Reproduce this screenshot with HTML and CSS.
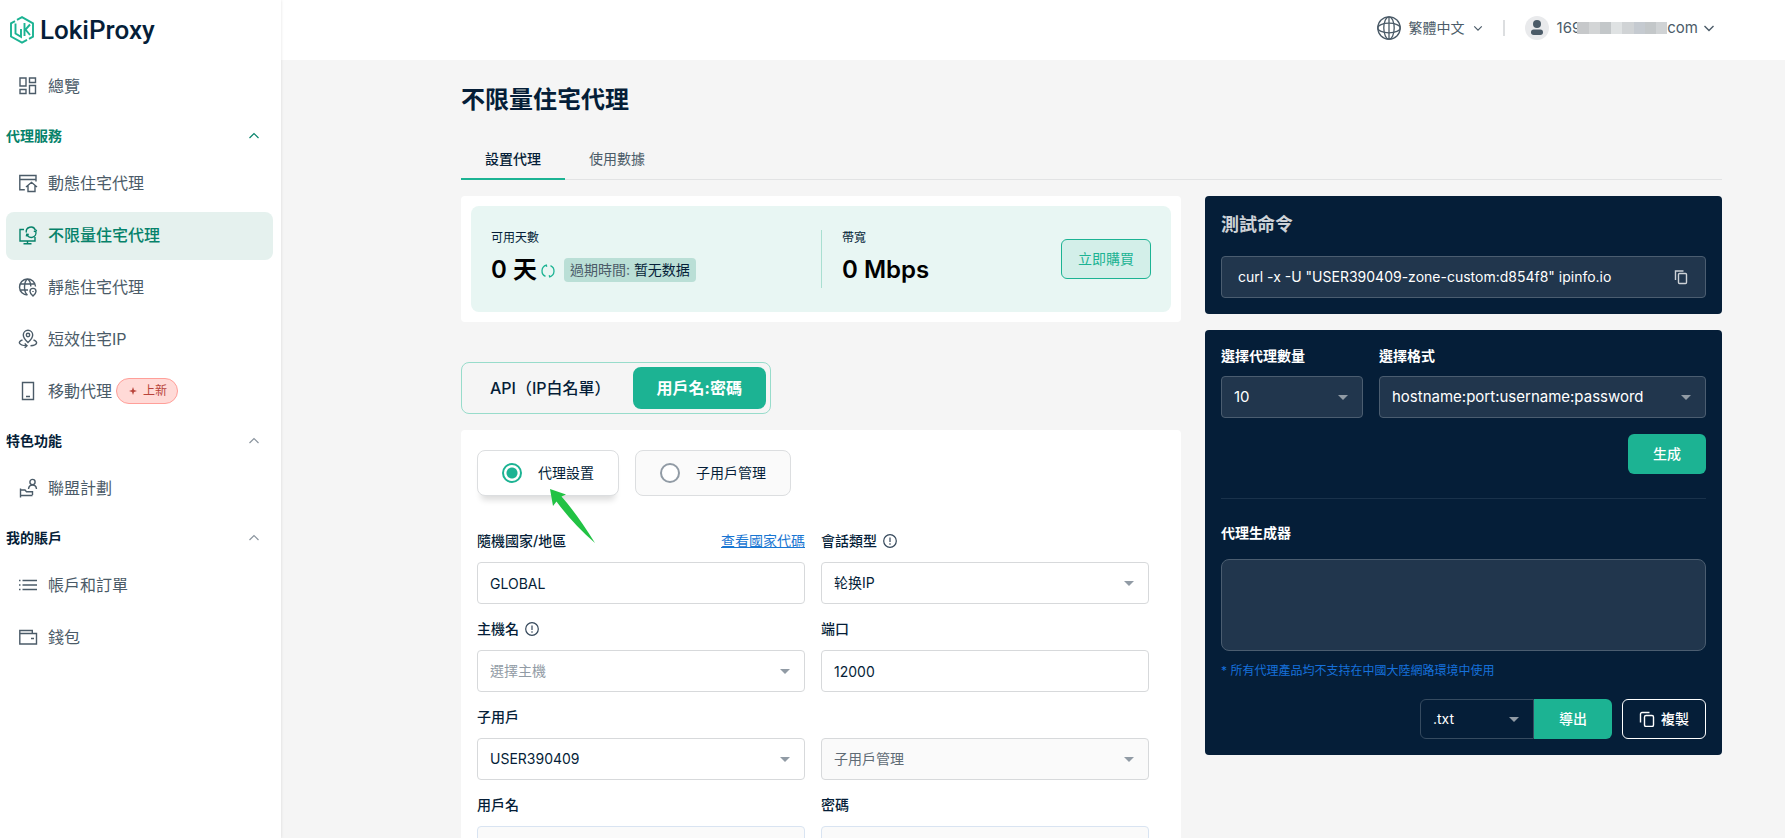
FILE: index.html
```html
<!DOCTYPE html>
<html lang="zh-Hant">
<head>
<meta charset="utf-8">
<meta name="viewport" content="width=device-width, initial-scale=1">
<title>LokiProxy - 不限量住宅代理</title>
<link rel="stylesheet" href="styles.css">
</head>
<body>
<div class="app">
  <aside class="sidebar">
    <a class="logo" href="#">
      <svg class="logo-mark" viewBox="0 0 24 28" fill="none" stroke="#1cb393" stroke-width="1.900">
        <path d="M5 5.200L1 7.400V20.500L12 26.600 17 23.800"/>
        <path d="M7 3.800L12 1.200 23 7.300V20.600L19 22.800"/>
        <path d="M5.500 7.500V17.500L11 20.800V13"/>
        <path d="M14.500 7V20M20 8.500L15.500 13.500 20 19"/>
      </svg>
      <span class="logo-text">LokiProxy</span>
    </a>
    <nav class="nav">
      <a class="item" href="#">
        <svg class="icon" viewBox="0 0 20 20"><path d="M2 2h6v8H2zM2 13.500h6V17.500H2zM11.500 2h6v4.500h-6zM11.500 9.500h6v8h-6z"/></svg>
        <span>總覽</span>
      </a>
      <button class="group current" type="button"><span>代理服務</span><svg class="chev" viewBox="0 0 12 12"><path d="M1.500 8L6 3.500 10.500 8"/></svg></button>
      <a class="item" href="#">
        <svg class="icon" viewBox="0 0 20 20"><path d="M18 8.500V2.500H1.800v14.200h5M1.800 6.500H18M8 14l5.500-4.700L19 14M10 12.800V18.500h7v-5.700"/></svg>
        <span>動態住宅代理</span>
      </a>
      <a class="item active" href="#">
        <svg class="icon" viewBox="0 0 20 20"><path d="M6 4.500H2v11.500h15v-4M9.500 16v2.700M5.500 18.700h8M8.300 7.500a4.700 4.700 0 0 1 9-2.500M17.800 6.500a4.700 4.700 0 0 1-8.800 3.200M15.800 6.200l2 .3.700-1.800M10.800 9.500l-2-.2-.5 2"/></svg>
        <span>不限量住宅代理</span>
      </a>
      <a class="item" href="#">
        <svg class="icon" viewBox="0 0 20 20"><path d="M9.500 18a8 8 0 1 1 8-8.500M9.500 18c-4-3-4-13 0-16 2.200 1.500 3.300 4.500 3.300 7.500M2.300 7h14.600M2.300 13H10M15 19c-2-1.900-3-3.100-3-4.600a3 3 0 0 1 6 0c0 1.500-1 2.700-3 4.600zM15 14v1"/></svg>
        <span>靜態住宅代理</span>
      </a>
      <a class="item" href="#">
        <svg class="icon" viewBox="0 0 20 20"><path d="M10 13.500C6.800 10.500 5.300 8.500 5.300 6a4.700 4.700 0 0 1 9.400 0c0 2.500-1.500 4.500-4.700 7.500z"/><circle cx="10" cy="6" r="1.700"/><path d="M4.500 11C-.5 12.500.2 16.200 8.500 16.800M15.500 11c4.800 1.500 4.200 5.200-3 5.800M6.700 14.500l2.300 2.300-2.300 2"/></svg>
        <span>短效住宅IP</span>
      </a>
      <a class="item" href="#">
        <svg class="icon" viewBox="0 0 20 20"><path d="M4.500 1.500h11v17h-11zM8 15.500h4"/></svg>
        <span>移動代理</span>
        <span class="badge"><svg viewBox="0 0 8 8"><path d="M4 0L5 3 8 4 5 5 4 8 3 5 0 4 3 3z"/></svg>上新</span>
      </a>
      <button class="group" type="button"><span>特色功能</span><svg class="chev" viewBox="0 0 12 12"><path d="M1.500 8L6 3.500 10.500 8"/></svg></button>
      <a class="item" href="#">
        <svg class="icon" viewBox="0 0 20 20"><circle cx="14.500" cy="4" r="2.600"/><path d="M10.500 11c.3-2.500 1.800-4 4-4s3.800 1.500 4 4M2.500 10.500V19.500M2.500 12h4.500l1.500 1.700h6v3.300M2.500 17.500h12"/></svg>
        <span>聯盟計劃</span>
      </a>
      <button class="group" type="button"><span>我的賬戶</span><svg class="chev" viewBox="0 0 12 12"><path d="M1.500 8L6 3.500 10.500 8"/></svg></button>
      <a class="item" href="#">
        <svg class="icon" viewBox="0 0 20 20"><path d="M4.500 5.500h14.500M4.500 10h14.500M4.500 14.500h14.500M1 5.500h1.500M1 10h1.500M1 14.500h1.500"/></svg>
        <span>帳戶和訂單</span>
      </a>
      <a class="item" href="#">
        <svg class="icon" viewBox="0 0 20 20"><path d="M1.800 6.500h16.700V17H1.800zM1.800 6.500V3.500h12.500v3M13 11.500h3"/></svg>
        <span>錢包</span>
      </a>
    </nav>
  </aside>

  <div class="page">
    <header class="topbar">
      <button class="top-btn" type="button">
        <svg class="globe" viewBox="0 0 24 24"><circle cx="12" cy="12" r="11.200"/><ellipse cx="12" cy="12" rx="5.200" ry="11.200"/><path d="M12 1v22"/><ellipse cx="12" cy="12" rx="11.200" ry="4.800"/></svg>
        <span>繁體中文</span>
        <svg class="chev-sm" viewBox="0 0 12 12"><path d="M1.500 4L6 8.500 10.500 4"/></svg>
      </button>
      <span class="sep"></span>
      <button class="top-btn" type="button">
        <svg class="avatar" viewBox="0 0 24 24"><circle cx="12" cy="12" r="12" fill="#e9eaec"/><circle cx="12" cy="8" r="4" fill="#4b5b68"/><rect x="6" y="13.500" width="12" height="5.500" rx="2.700" fill="#4b5b68"/></svg>
        <span class="mail"><span>169</span><span class="mosaic"><i class="m1"></i><i class="m2"></i><i class="m3"></i><i class="m4"></i><i class="m5"></i><i class="m6"></i><i class="m3"></i><i class="m5"></i></span><span>com</span></span>
        <svg class="chev-md" viewBox="0 0 12 12"><path d="M1.500 4L6 8.500 10.500 4"/></svg>
      </button>
    </header>

    <main class="content">
      <h1 class="title">不限量住宅代理</h1>
      <div class="tabs">
        <button class="tab on" type="button">設置代理</button>
        <button class="tab" type="button">使用數據</button>
      </div>
      <div class="columns">
        <div class="left">
          <section class="card summary">
            <div class="plan">
              <div class="stat days">
                <span class="stat-label">可用天數</span>
                <div class="stat-row">
                  <strong class="stat-value">0 天</strong>
                  <svg class="refresh" viewBox="0 0 14 14"><path d="M5.300 1.200A6 6 0 0 0 4.500 12.400M8.700 12.800A6 6 0 0 0 9.500 1.600M3.600 1.800l1.700-.6.500 1.500M10.400 12.200l-1.700.6-.5-1.500"/></svg>
                  <span class="expire">過期時間: <b>暂无数据</b></span>
                </div>
              </div>
              <div class="stat band">
                <span class="stat-label">帶寬</span>
                <div class="stat-row"><strong class="stat-value">0 Mbps</strong></div>
              </div>
              <button class="buy" type="button">立即購買</button>
            </div>
          </section>

          <div class="segment">
            <button class="seg" type="button">API（IP白名單）</button>
            <button class="seg on" type="button">用戶名:密碼</button>
          </div>

          <section class="card form-card">
            <div class="modes">
              <label class="mode on"><input class="radio" type="radio" name="mode" checked>代理設置</label>
              <label class="mode"><input class="radio" type="radio" name="mode">子用戶管理</label>
              <svg class="pointer" viewBox="0 0 46 55"><path d="M0 0L16 5.500 11.500 7.500Q27 25 45 54Q23 35 6.500 12.500L3 17z"/></svg>
            </div>
            <form class="fields">
              <div class="field">
                <div class="label-row"><label class="label" for="country">隨機國家/地區</label><a class="link" href="#">查看國家代碼</a></div>
                <input class="control" id="country" type="text" value="GLOBAL">
              </div>
              <div class="field">
                <div class="label-row"><label class="label" for="session">會話類型</label><svg class="info" viewBox="0 0 14 14"><circle cx="7" cy="7" r="6.300"/><path d="M7 3.500v4.500M7 9.300v1.400"/></svg></div>
                <div class="pick"><select class="control" id="session"><option>轮换IP</option></select></div>
              </div>
              <div class="field">
                <div class="label-row"><label class="label" for="host">主機名</label><svg class="info" viewBox="0 0 14 14"><circle cx="7" cy="7" r="6.300"/><path d="M7 3.500v4.500M7 9.300v1.400"/></svg></div>
                <div class="pick"><select class="control hint" id="host"><option>選擇主機</option></select></div>
              </div>
              <div class="field">
                <div class="label-row"><label class="label" for="port">端口</label></div>
                <input class="control" id="port" type="text" value="12000">
              </div>
              <div class="field">
                <div class="label-row"><label class="label" for="sub">子用戶</label></div>
                <div class="pick"><select class="control" id="sub"><option>USER390409</option></select></div>
              </div>
              <div class="field">
                <div class="label-row"></div>
                <div class="pick"><select class="control muted" aria-label="子用戶管理"><option>子用戶管理</option></select></div>
              </div>
              <div class="field">
                <div class="label-row"><label class="label" for="user">用戶名</label></div>
                <input class="control locked" id="user" type="text" readonly>
              </div>
              <div class="field">
                <div class="label-row"><label class="label" for="pass">密碼</label></div>
                <input class="control locked" id="pass" type="text" readonly>
              </div>
            </form>
          </section>
        </div>

        <div class="right">
          <section class="panel">
            <h2 class="panel-title">測試命令</h2>
            <div class="command">
              <code class="code">curl -x -U "USER390409-zone-custom:d854f8" ipinfo.io</code>
              <button class="copy-btn" type="button" aria-label="複製命令"><svg class="copy" viewBox="0 0 16 16"><path d="M2.500 11V2h8"/><rect x="5.500" y="4.500" width="8" height="10" rx="1"/></svg></button>
            </div>
          </section>
          <section class="panel">
            <div class="options">
              <div class="option count"><label class="dlabel" for="count">選擇代理數量</label><div class="pick"><select class="control dark" id="count"><option>10</option></select></div></div>
              <div class="option"><label class="dlabel" for="format">選擇格式</label><div class="pick"><select class="control dark" id="format"><option>hostname:port:username:password</option></select></div></div>
            </div>
            <div class="generate"><button class="primary" type="button">生成</button></div>
            <label class="dlabel" for="output">代理生成器</label>
            <textarea class="output" id="output"></textarea>
            <p class="note">* 所有代理產品均不支持在中國大陸網路環境中使用</p>
            <div class="actions">
              <div class="export"><div class="pick"><select class="control ext" aria-label="文件格式"><option>.txt</option></select></div><button class="primary join" type="button">導出</button></div>
              <button class="outline" type="button"><svg class="copy" viewBox="0 0 16 16"><path d="M1.500 11.500V3a1.500 1.500 0 0 1 1.500-1.500h7.500"/><rect x="5.500" y="4.500" width="9" height="11" rx="1.500"/></svg>複製</button>
            </div>
          </section>
        </div>
      </div>
    </main>
  </div>
</div>
</body>
</html>
```
FILE: styles.css
```css
* { box-sizing: border-box; }
body {
  margin: 0;
  background: #f5f5f5;
  color: #051e38;
  font-family: Inter, "Noto Sans CJK TC", sans-serif;
  font-size: 14px;
  line-height: 20px;
}
button, input, select, textarea { font: inherit; color: inherit; margin: 0; }
button { border: 0; background: none; padding: 0; cursor: pointer; }
a { color: inherit; text-decoration: none; }
svg { display: block; flex: none; }

.app { display: flex; height: 100vh; }

/* Sidebar */
.sidebar { flex: none; width: 281px; background: #fff; box-shadow: 0 0 3px rgba(0, 0, 0, .12); z-index: 1; }
.logo { display: flex; align-items: center; gap: 6px; height: 60px; padding-left: 10px; }
.logo-mark { width: 24px; height: 28px; }
.logo-text { font-family: Roboto, sans-serif; font-size: 26px; font-weight: 500; line-height: 32px; }
.nav { display: flex; flex-direction: column; padding: 1px 8px 0 6px; }
.item {
  display: flex; align-items: center; height: 48px; margin: 2px 0; padding: 0 0 2px 12px;
  border-radius: 8px; color: #4b5b68; font-size: 16px; line-height: 24px;
}
.item.active { background: #e5f1ee; color: #06826a; font-weight: 500; }
.icon { width: 20px; height: 20px; margin-right: 10px; fill: none; stroke: currentColor; stroke-width: 1.4; }
.group {
  display: flex; align-items: center; justify-content: space-between; height: 45px;
  padding-right: 13px; font-weight: 700; text-align: left;
}
.group.current { color: #06826a; }
.chev { width: 12px; height: 12px; fill: none; stroke: #8a949e; stroke-width: 1.2; }
.current .chev { stroke: #06826a; }
.badge {
  display: flex; align-items: center; gap: 6px; height: 26px; margin-left: 4px; padding: 0 10px 0 12px;
  border: 1px solid #ff9f99; border-radius: 13px; background: #ffdad7; color: #b8433a; font-size: 12px; line-height: 20px;
}
.badge svg { width: 8px; height: 8px; fill: currentColor; }

/* Top bar */
.page { flex: 1; min-width: 0; display: flex; flex-direction: column; }
.topbar {
  flex: none; display: flex; align-items: center; justify-content: flex-end; height: 60px;
  padding: 0 70px 4px 0; background: #fff; color: #4b5b68;
}
.top-btn { display: flex; align-items: center; gap: 8px; }
.globe { width: 24px; height: 24px; fill: none; stroke: #4b5b68; stroke-width: 1.3; }
.avatar { width: 24px; height: 24px; }
.chev-sm, .chev-md { width: 10px; height: 10px; fill: none; stroke: #4b5b68; stroke-width: 1.4; }
.chev-md { width: 12px; height: 12px; margin-left: -3px; }
.sep { width: 2px; height: 16px; margin: 0 20px; background: #dcdee0; }
.mail { display: flex; align-items: center; font-size: 15px; }
.mosaic { display: flex; width: 90px; height: 12px; margin-left: -4px; z-index: 1; }
.mosaic i { flex: 1; }
.m1 { background: #c6c8ca; }
.m2 { background: #d3d5d6; }
.m3 { background: #c3c7c9; }
.m4 { background: #dfe2e3; }
.m5 { background: #d0d3d5; }
.m6 { background: #c5cad0; }

/* Content */
.content { flex: 1; min-height: 0; overflow-y: auto; scrollbar-width: none; padding: 21px 63px 24px 180px; }
.title { margin: 0; font-size: 24px; line-height: 38px; font-weight: 700; }
.tabs { display: flex; margin-top: 21px; box-shadow: inset 0 -1px #e2e3e4; }
.tab { height: 40px; padding: 0 24px; color: #4b5b68; border-bottom: 2px solid transparent; }
.tab.on { border-color: #1cb393; color: #051e38; font-weight: 500; }
.columns { display: grid; grid-template-columns: 720fr 517fr; gap: 24px; margin-top: 16px; align-items: start; }
.card { background: #fff; border-radius: 4px; }
.summary { padding: 10px; }
.plan { display: flex; align-items: center; height: 106px; padding: 0 20px; border-radius: 8px; background: #e8f6f3; }
.stat { display: flex; flex-direction: column; justify-content: space-between; height: 58px; }
.days { flex: 1; }
.band { flex: 0 0 240px; padding-left: 20px; border-left: 1px solid #a9dfd1; }
.stat-label { font-size: 12px; line-height: 16px; }
.stat-row { display: flex; align-items: center; height: 36px; }
.stat-value { color: #000; font-size: 24px; line-height: 36px; font-weight: 600; }
.refresh { width: 14px; height: 14px; margin: 2px 9px 0 4px; fill: none; stroke: #1cb393; stroke-width: 1.3; }
.expire { padding: 2px 6px; border-radius: 4px; background: #badfd6; color: #4b5b68; }
.expire b { font-weight: 400; color: #051e38; }
.buy { height: 40px; padding: 0 16px; border: 1px solid #1cb393; border-radius: 6px; background: #d3efe9; color: #1cb393; }

.segment { display: inline-flex; margin-top: 40px; padding: 4px; border: 1px solid #98dccb; border-radius: 8px; vertical-align: top; }
.seg { height: 42px; padding: 0 22px 0 24px; border-radius: 8px; font-size: 16px; font-weight: 500; }
.seg.on { padding: 0 24px; background: #1cb393; color: #fff; font-weight: 700; }

.form-card { margin-top: 16px; padding: 20px 32px 32px 16px; }
.modes { position: relative; display: flex; gap: 16px; }
.mode {
  display: flex; align-items: center; gap: 16px; height: 46px; padding: 0 24px;
  border: 1px solid #dcdee0; border-radius: 8px; background: #fafafa;
}
.mode.on { background: #fff; box-shadow: 0 8px 6px -4px rgba(0, 0, 0, .14); }
.radio { appearance: none; width: 20px; height: 20px; border: 2px solid #919ba5; border-radius: 50%; background: #fff; }
.radio:checked { border-color: #1cb393; background: radial-gradient(circle, #1cb393 5px, #fff 6px); }
.pointer { position: absolute; left: 73px; top: 39px; width: 46px; height: 55px; fill: #22c244; }
.fields { display: grid; grid-template-columns: 1fr 1fr; gap: 10px 16px; margin-top: 30px; }
.label-row { display: flex; align-items: center; gap: 6px; height: 30px; margin-bottom: 6px; }
.label { font-weight: 500; }
.link { margin-left: auto; color: #1976d2; text-decoration: underline; }
.info { width: 14px; height: 14px; fill: none; stroke: #34475a; stroke-width: 1.2; }
.control {
  grid-area: 1 / 1; display: block; width: 100%; height: 42px; padding: 0 12px; border: 1px solid #d7d9db;
  border-radius: 4px; background: #fff; appearance: none; outline: 0;
}
.pick { display: grid; align-items: center; }
.pick::after {
  content: ""; grid-area: 1 / 1; justify-self: end; margin-right: 15px; pointer-events: none;
  border: 5px solid transparent; border-top-color: #919ba5; border-bottom: 0;
}
.hint { color: #919ba5; }
.muted { background: #fafafa; color: #5f6b75; }
.locked { background: #fafafa; border-color: #d9e4f2; }

/* Dark panels */
.right { display: grid; gap: 16px; }
.panel { padding: 16px; border-radius: 4px; background: #051e38; color: #fff; }
.panel-title { margin: 0; padding-bottom: 18px; color: #cdd2d7; font-size: 18px; line-height: 26px; font-weight: 700; }
.command {
  display: flex; align-items: center; justify-content: space-between; height: 42px; padding: 0 16px;
  border: 1px solid #4b5d70; border-radius: 4px; background: #21364d;
}
.code { font-family: inherit; font-size: 14px; }
.copy { width: 16px; height: 16px; fill: none; stroke: currentColor; stroke-width: 1.4; }
.copy-btn { color: #cdd2d7; }
.options { display: flex; gap: 16px; }
.option { flex: 1; }
.count { flex: 0 0 142px; }
.dlabel { display: block; margin-bottom: 10px; font-weight: 700; }
.dark { border-color: #4b5d70; background: #21364d; color: #fff; font-size: 15px; }
.generate { display: flex; justify-content: flex-end; margin-bottom: 24px; padding: 16px 0 24px; border-bottom: 1px solid #1a324b; }
.primary { height: 40px; padding: 0 25px; border-radius: 6px; background: #1cb393; color: #fff; font-weight: 500; }
.output { display: block; width: 100%; height: 92px; margin-top: 16px; padding: 12px; border: 1px solid #4b5d70; border-radius: 8px; background: #21364d; resize: none; color: #fff; }
.note { margin: 10px 0 18px; color: #1671dc; font-size: 12px; }
.actions { display: flex; justify-content: flex-end; gap: 10px; }
.export { display: flex; }
.ext { width: 114px; height: 40px; border-color: #364b60; border-radius: 6px 0 0 6px; background: #051e38; color: #fff; }
.join { border-radius: 0 6px 6px 0; }
.outline { display: flex; align-items: center; gap: 6px; height: 40px; padding: 0 16px; border: 1px solid #fff; border-radius: 6px; color: #fff; font-weight: 500; }
```
